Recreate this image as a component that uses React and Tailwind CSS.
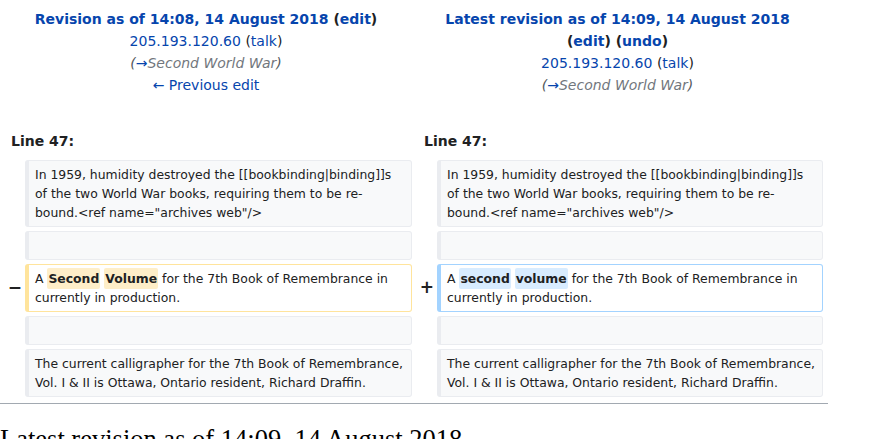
import React from 'react';

const link = 'text-[#0645ad]';

const Marker = ({ sign }) => (
  <div className="flex items-center justify-end pr-[3px] text-[17px] font-bold text-[#202122]">
    {sign}
  </div>
);

const Context = ({ children }) => (
  <div className="rounded-[3px] border border-[#eaecf0] border-l-4 bg-[#f8f9fa] px-[6px] py-[4px] text-[12.4px] leading-[19px] text-[#202122] min-h-[29px]">
    {children}
  </div>
);

const Changed = ({ kind, children }) => (
  <div
    className={`rounded-[3px] border border-l-4 bg-white px-[6px] py-[4px] text-[12.4px] leading-[19px] text-[#202122] ${
      kind === 'del' ? 'border-[#ffe49c]' : 'border-[#a3d3ff]'
    }`}
  >
    {children}
  </div>
);

const Hl = ({ kind, children }) => (
  <span
    className={`rounded-[2px] px-[1px] py-[3px] font-bold ${
      kind === 'del' ? 'bg-[#feeec8]' : 'bg-[#d8ecff]'
    }`}
  >
    {children}
  </span>
);

export default function App() {
  const para1 = (
    <>
      In 1959, humidity destroyed the [[bookbinding|binding]]s
      <br />
      of the two World War books, requiring them to be re-
      <br />
      bound.&lt;ref name="archives web"/&gt;
    </>
  );
  const para3 = 'The current calligrapher for the 7th Book of Remembrance, Vol. I & II is Ottawa, Ontario resident, Richard Draffin.';

  return (
    <div className="w-[874px] h-[439px] overflow-hidden bg-white" style={{ fontFamily: '"DejaVu Sans", sans-serif' }}>
      <div className="w-[828px] pt-[8px]">
        <div className="grid grid-cols-[25px_387px_25px_386px] gap-y-[4px]">
          {/* headers */}
          <div className="col-span-2 text-center text-[14px] leading-[22px] text-[#202122]">
            <div className="font-bold">
              <span className={link}>Revision as of 14:08, 14 August 2018</span> (<span className={link}>edit</span>)
            </div>
            <div>
              <span className={link}>205.193.120.60</span> (<span className={link}>talk</span>)
            </div>
            <div className="italic text-[#54595d]">
              (<span className={link}>→</span><span className="text-[#72777d]">Second World War</span>)
            </div>
            <div className={link}>← Previous edit</div>
          </div>
          <div className="col-span-2 text-center text-[14px] leading-[22px] text-[#202122]">
            <div className={`font-bold ${link}`}>Latest revision as of 14:09, 14 August 2018</div>
            <div className="font-bold">
              (<span className={link}>edit</span>) (<span className={link}>undo</span>)
            </div>
            <div>
              <span className={link}>205.193.120.60</span> (<span className={link}>talk</span>)
            </div>
            <div className="italic text-[#54595d]">
              (<span className={link}>→</span><span className="text-[#72777d]">Second World War</span>)
            </div>
          </div>

          {/* line numbers */}
          <div className="col-span-2 mt-[30px] mb-[4px] pl-[11px] text-[14px] font-bold leading-[22px] text-[#202122]">Line 47:</div>
          <div className="col-span-2 mt-[30px] mb-[4px] pl-[12px] text-[14px] font-bold leading-[22px] text-[#202122]">Line 47:</div>

          <div />
          <Context>{para1}</Context>
          <div />
          <Context>{para1}</Context>

          <div />
          <Context />
          <div />
          <Context />

          <Marker sign="−" />
          <Changed kind="del">
            A <Hl kind="del">Second</Hl> <Hl kind="del">Volume</Hl> for the 7th Book of Remembrance in currently in production.
          </Changed>
          <Marker sign="+" />
          <Changed kind="add">
            A <Hl kind="add">second</Hl> <Hl kind="add">volume</Hl> for the 7th Book of Remembrance in currently in production.
          </Changed>

          <div />
          <Context />
          <div />
          <Context />

          <div />
          <Context>{para3}</Context>
          <div />
          <Context>{para3}</Context>
        </div>
        <div className="mt-[6px] h-px bg-[#a2a9b1]" />
      </div>
      <h2 className="mt-[18px] text-[26.5px] leading-[1.3] text-black" style={{ fontFamily: '"Liberation Serif", serif' }}>
        Latest revision as of 14:09, 14 August 2018
      </h2>
    </div>
  );
}
